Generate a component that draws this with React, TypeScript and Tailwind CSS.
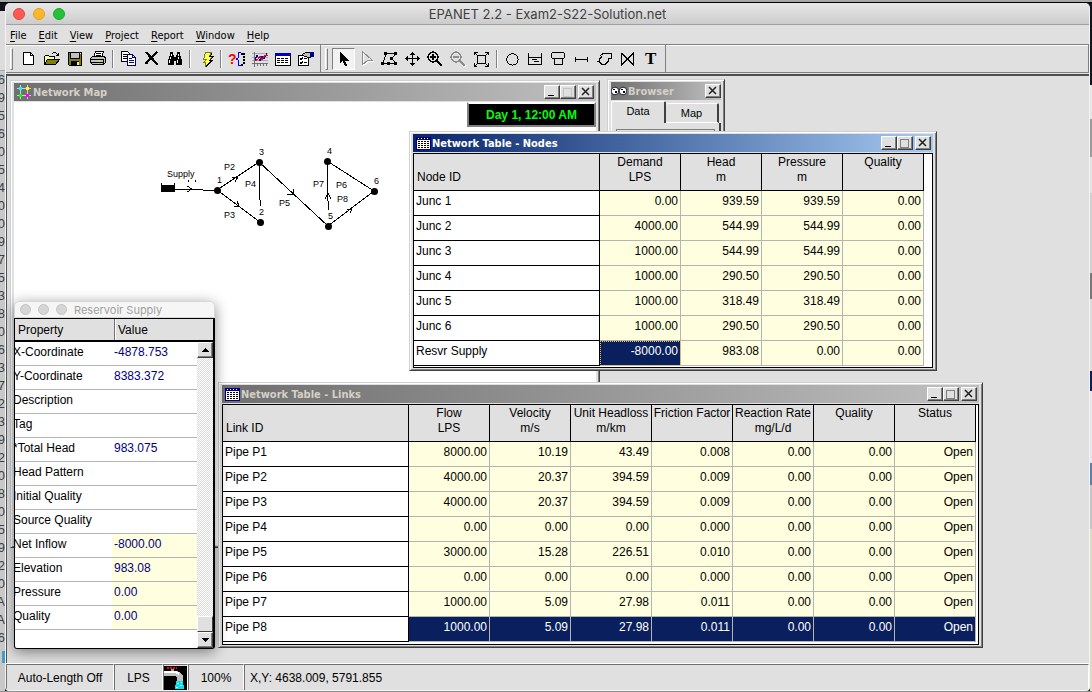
import React from "react";

type Row = { id: string; values: string[]; selected?: number[] };
type Column = [string, string];

const MENU = ["File", "Edit", "View", "Project", "Report", "Window", "Help"];

const NODE_COLUMNS: Column[] = [["Demand", "LPS"], ["Head", "m"], ["Pressure", "m"], ["Quality", ""]];
const NODE_ROWS: Row[] = [
  { id: "Junc 1", values: ["0.00", "939.59", "939.59", "0.00"] },
  { id: "Junc 2", values: ["4000.00", "544.99", "544.99", "0.00"] },
  { id: "Junc 3", values: ["1000.00", "544.99", "544.99", "0.00"] },
  { id: "Junc 4", values: ["1000.00", "290.50", "290.50", "0.00"] },
  { id: "Junc 5", values: ["1000.00", "318.49", "318.49", "0.00"] },
  { id: "Junc 6", values: ["1000.00", "290.50", "290.50", "0.00"] },
  { id: "Resvr Supply", values: ["-8000.00", "983.08", "0.00", "0.00"], selected: [0] },
];

const LINK_COLUMNS: Column[] = [
  ["Flow", "LPS"],
  ["Velocity", "m/s"],
  ["Unit Headloss", "m/km"],
  ["Friction Factor", ""],
  ["Reaction Rate", "mg/L/d"],
  ["Quality", ""],
  ["Status", ""],
];
const LINK_ROWS: Row[] = [
  { id: "Pipe P1", values: ["8000.00", "10.19", "43.49", "0.008", "0.00", "0.00", "Open"] },
  { id: "Pipe P2", values: ["4000.00", "20.37", "394.59", "0.009", "0.00", "0.00", "Open"] },
  { id: "Pipe P3", values: ["4000.00", "20.37", "394.59", "0.009", "0.00", "0.00", "Open"] },
  { id: "Pipe P4", values: ["0.00", "0.00", "0.00", "0.000", "0.00", "0.00", "Open"] },
  { id: "Pipe P5", values: ["3000.00", "15.28", "226.51", "0.010", "0.00", "0.00", "Open"] },
  { id: "Pipe P6", values: ["0.00", "0.00", "0.00", "0.000", "0.00", "0.00", "Open"] },
  { id: "Pipe P7", values: ["1000.00", "5.09", "27.98", "0.011", "0.00", "0.00", "Open"] },
  {
    id: "Pipe P8",
    values: ["1000.00", "5.09", "27.98", "0.011", "0.00", "0.00", "Open"],
    selected: [0, 1, 2, 3, 4, 5, 6],
  },
];

const PROPERTIES: { name: string; value: string; computed?: boolean }[] = [
  { name: "X-Coordinate", value: "-4878.753" },
  { name: "Y-Coordinate", value: "8383.372" },
  { name: "Description", value: "" },
  { name: "Tag", value: "" },
  { name: "*Total Head", value: "983.075" },
  { name: "Head Pattern", value: "" },
  { name: "Initial Quality", value: "" },
  { name: "Source Quality", value: "" },
  { name: "Net Inflow", value: "-8000.00", computed: true },
  { name: "Elevation", value: "983.08", computed: true },
  { name: "Pressure", value: "0.00", computed: true },
  { name: "Quality", value: "0.00", computed: true },
];

const BACKDROP_DIGITS = "69560540097538063723920805920AA6".split("");

const RIGHT_STRIP = [
  "h-[82px] bg-[#12131c]",
  "h-[34px] bg-[#e6e6e6]",
  "h-[38px] bg-[#9a9a9a]",
  "h-[36px] bg-[#e2e2e2]",
  "h-[80px] bg-[#d0d0d0]",
  "h-[26px] bg-[#777777]",
  "h-[72px] bg-[#dcdcdc]",
  "h-[20px] bg-[#0a1f5c]",
  "h-[72px] bg-[#e6e6ea]",
  "h-[22px] bg-[#5a7fb0]",
  "h-[44px] bg-[#c4c4c4]",
  "flex-1 bg-[#dcdcc0]",
];

/* ---------- toolbar drawings ---------- */

const K = "#000000";

const icons: Record<string, React.ReactNode> = {
  New: (
    <>
      <path d="M4.5 3.5h7l3 3v9h-10z" fill="#fff" stroke={K} />
      <path d="M11.5 3.5v3h3" fill="none" stroke={K} />
    </>
  ),
  Open: (
    <>
      <path d="M2.5 15.5v-8l1-1h3l1 1h5v3" fill="#ffff99" stroke={K} />
      <path d="M2.5 15.5l3-5h12l-4 5z" fill="#808000" stroke={K} />
      <path d="M10 4h1M11 3h3M14 4h1M15 5h1M16 4v3M14 6.5h3" fill="none" stroke={K} />
    </>
  ),
  Save: (
    <>
      <path d="M3.5 3.5h13v13h-12l-1-1z" fill="#808000" stroke={K} />
      <path d="M5.5 3.5h9v6h-9z" fill="#c0c0c0" stroke={K} />
      <path d="M6 12h8v4h-8z" fill={K} />
      <path d="M12 13h2v3h-2z" fill="#e0e0e0" />
      <path d="M15 4h1v1h-1z" fill="#fff" />
    </>
  ),
  Print: (
    <>
      <path d="M5.5 8.5l2-6h8l-2 6z" fill="#fff" stroke={K} />
      <path d="M8 4.5h5M8 6.5h5" stroke={K} />
      <path d="M2.5 9.5l2-2h12l1 2v4l-2 2h-11l-2-2z" fill="#c0c0c0" stroke={K} />
      <path d="M2 10.5h13M3 13.5h12M15.5 10v5" stroke={K} fill="none" />
      <path d="M9 11.5h4" stroke="#e8e800" />
      <path d="M5 15.5h10" stroke={K} />
    </>
  ),
  Copy: (
    <>
      <path d="M2.5 2.5h6l2 2v8h-8z" fill="#fff" stroke={K} />
      <path d="M4 5.5h4M4 7.5h4M4 9.5h4" stroke={K} />
      <path d="M8.5 5.5h5l3 3v8h-8z" fill="#fff" stroke="#000080" />
      <path d="M13.5 5.5v3h3M10 9.5h3M10 11.5h5M10 13.5h5" fill="none" stroke="#000080" />
    </>
  ),
  Delete: (
    <>
      <path d="M3 3h2l10 11v1h-1zM4 3l11 12" fill={K} stroke={K} />
      <path d="M15 3l-11 11" stroke={K} strokeWidth="1.5" />
      <path d="M3 13h3v2h-3z" fill={K} />
    </>
  ),
  Find: (
    <>
      <path d="M5 3h3v3h1v2h2v-2h1v-3h3v3l2 5v5h-6v-4h-2v4h-6v-5l2-5z" fill={K} />
      <path d="M6 5v2M5 8v2M4 11v3M13 5v2M13 8v2M12 11v3" stroke="#fff" />
    </>
  ),
  Run: (
    <>
      <path d="M9.5 3.5h6l-2 4h3l-3 4h2l-6 6v-4h-2l3-3h-3z" fill="#ffff60" stroke="#808000" />
      <path d="M16 4l-2 3.5h3l-3 4h2l-6 6" fill="none" stroke={K} />
    </>
  ),
  Query: (
    <>
      <text x="1" y="15" fill="#ff0000" className="font-['Liberation_Sans',Arial,sans-serif] text-[14px] font-bold">
        ?
      </text>
      <path d="M13.5 3.5h-2v5l-2 1.5 2 1.5v5h2" stroke="#0000ff" fill="none" />
      <path d="M14 4.5h3M17 4v12M14 15.5h3" stroke={K} strokeWidth="2" strokeDasharray="2 1" fill="none" />
    </>
  ),
  Graph: (
    <>
      <path d="M2 4.5h16M2 8.5h16M2 11.5h16" stroke="#a8a8a8" />
      <path d="M4.5 3v15M2 14.5h16M7.5 15v2M10.5 15v2M13.5 15v2M16.5 15v2" stroke="#707070" />
      <path d="M5 11l2-5 3 6 2-5 2 3 3-6" stroke="#0000c0" fill="none" />
      <path d="M5 12l3-2 2-3 2 4 3-5 3 1" stroke="#ff0000" fill="none" />
    </>
  ),
  Table: (
    <>
      <path d="M2.5 4.5h15v12h-15z" fill="#fff" stroke={K} />
      <path d="M2 4h16v3h-16z" fill="#0000c0" />
      <path d="M4 9.5h12M4 11.5h12M4 13.5h12" stroke={K} strokeDasharray="3 1" />
    </>
  ),
  Options: (
    <>
      <path d="M2.5 6.5h10v10h-10z" fill="#fff" stroke={K} />
      <path d="M4 9.5l1 1 2-2M8 9.5h3M4 13.5l1 1 2-2M8 13.5h3" stroke={K} fill="none" />
      <path d="M6.5 5.5l3-2h5v5h-3l-1-1h-2z" fill="#c0c0c0" stroke={K} />
      <path d="M14 3h4v5h-4z" fill="#000080" />
    </>
  ),
  Select: <path d="M6 3l8.5 8.5h-4l2.5 5-2 1-2.500-5.500-2.500 2.500z" fill={K} />,
  Vertex: (
    <>
      <path d="M6.5 3.5l10 9h-5l-5 4z" fill="none" stroke="#fff" />
      <path d="M5.5 2.5l10 9h-5l-5 4z" fill="none" stroke="#8c8c8c" />
    </>
  ),
  Region: (
    <>
      <path d="M3 14.5l3-10h10l-4 5 4 5z" fill="none" stroke={K} />
      <path d="M4 3h3v3h-3zM14 3h3v3h-3zM1 13h3v3h-3zM14 13h3v3h-3zM10 8h3v3h-3zM7 13h3v3h-3z" fill={K} />
    </>
  ),
  Pan: (
    <path
      d="M9.5 3v14M2 9.5h15M7 5.5h5M8 4.5h3M7 14.5h5M8 15.5h3M4.5 7v5M3.5 8v3M14.5 7v5M15.5 8v3"
      stroke={K}
      fill="none"
    />
  ),
  "Zoom In": (
    <>
      <circle cx="7" cy="8" r="5" fill="none" stroke={K} strokeWidth="1.3" />
      <path d="M4 8h6M7 5v6" stroke={K} strokeWidth="1.5" />
      <path d="M11 12l5 5" stroke={K} strokeWidth="2.5" />
    </>
  ),
  "Zoom Out": (
    <>
      <path d="M12 13l5 5" stroke="#fff" strokeWidth="2" />
      <circle cx="7" cy="8" r="5" fill="none" stroke="#8c8c8c" strokeWidth="1.3" />
      <path d="M4 8h6" stroke="#8c8c8c" strokeWidth="1.5" />
      <path d="M11 12l5 5" stroke="#8c8c8c" strokeWidth="2.5" />
    </>
  ),
  "Full Extent": (
    <>
      <path d="M5.5 6.5h8v8h-8z" fill="none" stroke={K} />
      <path
        d="M2.5 6v-2.500h3M13 3.500h3.500v2.500M16.500 14v3.500h-3.500M5 17.500h-2.500v-3.500M3 4l3 3M16 4l-3 3M16 17l-3-3M3 17l3-3"
        fill="none"
        stroke={K}
      />
    </>
  ),
  Junction: <circle cx="9.5" cy="10.5" r="5.7" fill="none" stroke={K} />,
  Reservoir: <path d="M2.5 4v11.500h13v-11.500M3 8.500h13M6 10.500h5M8 12.500h5" fill="none" stroke={K} />,
  Tank: <path d="M3.5 3.5h11l1 1v4l-1 1h-11l-1-1v-4zM5.500 9.500h8v6h-8z" fill="none" stroke={K} />,
  Pipe: <path d="M3.5 8v5M15.500 8v5M3 10.500h13" fill="none" stroke={K} />,
  Pump: <path d="M8 4.500h8.500v5h-3.500v3l-3 3h-3l-3-3v-2l3-3M2 12.500h2M5.500 6.500l2.500-2" fill="none" stroke={K} />,
  Valve: <path d="M3.5 4v12l12-12v12l-12-12" fill="none" stroke={K} />,
  Label: (
    <text x="4" y="15" className="font-['Liberation_Serif','Times_New_Roman',serif] text-[17px] font-bold">
      T
    </text>
  ),
};

function ToolButton({ name, pressed }: { name: string; pressed?: boolean }) {
  return (
    <button
      type="button"
      aria-label={name}
      className={
        pressed
          ? "flex h-[22px] w-[23px] items-center justify-center border border-t-[#808080] border-l-[#808080] border-r-white border-b-white bg-[#f2f2f2]"
          : "flex h-[22px] w-[23px] items-center justify-center"
      }
    >
      <svg width="19" height="20" viewBox="0 0 19 20" className="shrink-0" shapeRendering="crispEdges" aria-hidden="true">
        {icons[name]}
      </svg>
    </button>
  );
}

function ToolGroup({ items }: { items: string[] }) {
  return (
    <div className="flex h-full items-center border-r border-[#808080] pr-[3px]">
      <span className="mr-1 ml-1 h-[22px] w-[3px] border border-t-white border-r-[#808080] border-b-[#808080] border-l-white" />
      {items.map((item, i) =>
        item === "|" ? (
          <span key={i} className="mx-[3px] h-[18px] w-[2px] border-r border-l border-r-white border-l-[#808080]" />
        ) : (
          <ToolButton key={i} name={item} pressed={item === "Select"} />
        ),
      )}
    </div>
  );
}

/* ---------- child window chrome ---------- */

function CaptionButton({ kind, dim }: { kind: "Minimize" | "Maximize" | "Close"; dim?: boolean }) {
  return (
    <button
      type="button"
      aria-label={kind}
      className="flex h-[14px] w-4 items-center justify-center border border-t-white border-r-[#404040] border-b-[#404040] border-l-white bg-[#e0e0e0] shadow-[inset_-1px_-1px_0_#808080]"
    >
      <svg width="12" height="12" viewBox="0 0 12 12" className="shrink-0" shapeRendering="crispEdges" aria-hidden="true">
        {kind === "Minimize" && <path d="M2 9h6v1h-6z" fill={K} />}
        {kind === "Maximize" && (
          <path d="M1.5 2v8.500h8v-8.500M1 2h9" fill="none" stroke={dim ? "#c4c4c4" : "#808080"} strokeWidth="1" />
        )}
        {kind === "Close" && <path d="M2 2l7 7M9 2l-7 7" stroke="#202020" strokeWidth="1.5" shapeRendering="auto" />}
      </svg>
    </button>
  );
}

function TableGlyph() {
  return (
    <svg width="15" height="13" viewBox="0 0 15 13" shapeRendering="crispEdges" aria-hidden="true">
      <path d="M0 0h15v13h-15z" fill="#000080" />
      <path d="M1 3h13v9h-13z" fill={K} />
      <path d="M2 1.5h1M5 1.5h1M8 1.5h1M11 1.5h1" stroke="#fff" />
      <path d="M1 3.5h13M1 5.5h13M1 7.5h13M1 9.5h13M1 11.5h13" stroke="#fff" />
      <path d="M1.500 3v9M4.500 3v9M7.500 3v9M10.500 3v9M13.500 3v9" stroke="#fff" />
    </svg>
  );
}

function MapGlyph() {
  return (
    <svg width="15" height="14" viewBox="1 0 15 14" shapeRendering="crispEdges" aria-hidden="true">
      <path d="M4.5 0v14M11.500 0v14M1 3.500h14M1 10.500h14" stroke="#d0d0d0" />
      <path d="M3 2h3v3h-3z" fill="#00ffff" />
      <path d="M10 2h3v3h-3z" fill="#ffff00" />
      <path d="M3 9h3v3h-3z" fill="#00ff00" />
      <path d="M10 9h3v3h-3z" fill="#ff00ff" />
    </svg>
  );
}

function EyesGlyph() {
  return (
    <svg width="16" height="12" viewBox="0 0 16 12" aria-hidden="true">
      <circle cx="4" cy="6" r="3.8" fill="#fff" stroke={K} strokeWidth="0.8" />
      <circle cx="12" cy="6" r="3.8" fill="#fff" stroke={K} strokeWidth="0.8" />
      <path d="M4 6h2v2h-2zM12 6h2v2h-2z" fill="#000050" />
      <path d="M2 4.500h2M10 4.500h2" stroke={K} />
    </svg>
  );
}

function ChildWindow(props: {
  title: string;
  glyph: React.ReactNode;
  place: string;
  active?: boolean;
  palette?: boolean;
  dimMax?: boolean;
  children: React.ReactNode;
}) {
  const inset = props.palette ? "pr-0 pl-0" : "pr-[2px] pl-[3px]";
  return (
    <section
      aria-label={props.title}
      className={`absolute flex flex-col border border-t-[#d0d0d0] border-r-[#404040] border-b-[#404040] border-l-[#d0d0d0] bg-[#e0e0e0] px-[3px] py-[2px] shadow-[inset_1px_1px_0_#ffffff,inset_-1px_-1px_0_#808080] ${props.place}`}
    >
      <header
        className={
          props.active
            ? `mb-px flex h-[18px] shrink-0 items-center bg-linear-to-r from-[#0a246a] to-[#a6caf0] text-white ${inset}`
            : `mb-px flex h-[18px] shrink-0 items-center bg-linear-to-r from-[#707070] to-[#c0c0c0] text-[#d4d0c8] ${inset}`
        }
      >
        {props.glyph}
        <h2 className="ml-px flex-1 pt-[2px] font-['DejaVu_Sans_Condensed','DejaVu_Sans',sans-serif] text-[11px] leading-4 font-bold whitespace-nowrap">
          {props.title}
        </h2>
        {!props.palette && (
          <>
            <CaptionButton kind="Minimize" />
            <CaptionButton kind="Maximize" dim={props.dimMax} />
            <span className="w-[2px]" />
          </>
        )}
        <CaptionButton kind="Close" />
      </header>
      {props.children}
    </section>
  );
}

function DataGrid({ idLabel, columns, rows }: { idLabel: string; columns: Column[]; rows: Row[] }) {
  return (
    <div className="flex-1 border border-black bg-white">
      <table className="table-fixed border-separate border-spacing-0 text-[12px] leading-[15px]">
        <colgroup>
          <col className="w-[186px]" />
          {columns.map(([name]) => (
            <col key={name} className="w-[81px]" />
          ))}
        </colgroup>
        <thead>
          <tr className="h-[37px] bg-[#e0e0e0]">
            <th scope="col" className="border-r border-b border-black px-[3px] pb-[5px] text-left align-bottom font-normal">
              {idLabel}
            </th>
            {columns.map(([name, unit]) => (
              <th key={name} scope="col" className="border-r border-b border-black px-0 pt-px pb-0 align-top font-normal whitespace-nowrap">
                {name}
                <br />
                {unit}
              </th>
            ))}
          </tr>
        </thead>
        <tbody>
          {rows.map((row) => (
            <tr key={row.id} className="h-[25px]">
              <th scope="row" className="border-r border-b border-black px-[2px] pt-[3px] pb-0 text-left align-top font-normal">
                {row.id}
              </th>
              {row.values.map((value, i) => (
                <td
                  key={i}
                  className={
                    row.selected?.includes(i)
                      ? row.selected.length === 1
                        ? "border-r border-b border-[#b4b4b4] bg-[#0a1f5e] px-[2px] pt-[3px] pb-0 text-right align-top text-white outline-1 -outline-offset-1 outline-[#f0c050] outline-dotted"
                        : "border-r border-b border-[#b4b4b4] bg-[#0a1f5e] px-[2px] pt-[3px] pb-0 text-right align-top text-white"
                      : "border-r border-b border-[#b4b4b4] bg-[#ffffdf] px-[2px] pt-[3px] pb-0 text-right align-top"
                  }
                >
                  {value}
                </td>
              ))}
            </tr>
          ))}
        </tbody>
      </table>
    </div>
  );
}

/* ---------- network map ---------- */

const NODES = [
  { id: "1", x: 217, y: 190, lx: 217, ly: 183 },
  { id: "2", x: 260, y: 222, lx: 259, ly: 215 },
  { id: "3", x: 259, y: 162, lx: 259, ly: 155 },
  { id: "4", x: 327, y: 161, lx: 327, ly: 154 },
  { id: "5", x: 328, y: 226, lx: 328, ly: 219 },
  { id: "6", x: 374, y: 191, lx: 374, ly: 184 },
];
const PIPE_LABELS = [
  { t: "Supply", x: 167, y: 177 },
  { t: "P2", x: 224, y: 170 },
  { t: "P3", x: 224, y: 218 },
  { t: "P4", x: 245, y: 187 },
  { t: "P5", x: 279, y: 206 },
  { t: "P6", x: 336, y: 188 },
  { t: "P7", x: 313, y: 187 },
  { t: "P8", x: 337, y: 202 },
];

function NetworkMap() {
  return (
    <svg
      width="450"
      height="300"
      viewBox="14 102 450 300"
      className="absolute top-0 left-0 font-['Liberation_Sans',Arial,sans-serif] text-[9px]"
      role="img"
      aria-label="Pipe network"
    >
      <g stroke={K} fill="none" shapeRendering="crispEdges">
        <path d="M174 189l43 1.500M217 190l42-28M217 190l43 32M259.500 162v32l1 12M259 162l69 64M327.500 161v30l1 19M327 161l47 30M328 226l46-35" />
        <path d="M187 186l5 3-5 3M232 177h6l-3 5M234 206h5l-2-5M293 189v5h-6M325 199l3-6 3 6M347 209h5l-2 4M188.500 180v2M195.500 180v2" />
      </g>
      <path d="M161 183h1v2h12v-2h1v9h-14z" fill={K} />
      {NODES.map((n) => (
        <circle key={n.id} cx={n.x + 0.5} cy={n.y + 0.5} r="3.5" fill={K} />
      ))}
      {NODES.map((n) => (
        <text key={n.id} x={n.lx} y={n.ly}>
          {n.id}
        </text>
      ))}
      {PIPE_LABELS.map((l) => (
        <text key={l.t} x={l.x} y={l.y}>
          {l.t}
        </text>
      ))}
    </svg>
  );
}

/* ---------- property editor ---------- */

function ScrollArrow({ up }: { up?: boolean }) {
  return (
    <button
      type="button"
      aria-label={up ? "Scroll up" : "Scroll down"}
      className="flex h-4 w-full items-center justify-center border border-t-white border-r-[#404040] border-b-[#404040] border-l-white bg-[#e0e0e0] shadow-[inset_-1px_-1px_0_#808080]"
    >
      <svg width="7" height="4" viewBox="0 0 7 4" shapeRendering="crispEdges" aria-hidden="true">
        <path d={up ? "M3 0h1v1h1v1h1v1h1v1h-7v-1h1v-1h1v-1h1z" : "M0 0h7v1h-1v1h-1v1h-1v1h-1v-1h-1v-1h-1v-1h-1z"} fill={K} />
      </svg>
    </button>
  );
}

function PropertyEditor() {
  return (
    <section
      aria-label="Reservoir Supply"
      className="absolute top-[225px] left-[7px] flex h-[348px] w-[201px] flex-col rounded-t-[5px] rounded-b-[3px] bg-[#f4f4f4] shadow-[0_3px_14px_rgba(0,0,0,0.45)]"
    >
      <header className="flex h-[17px] shrink-0 items-center gap-[7px] rounded-t-[5px] border border-[#d8d8d8] bg-[#f6f6f6] px-[5px]">
        <span className="size-[11px] rounded-full border border-[#c4c4c4] bg-[#d6d6d6]" />
        <span className="size-[11px] rounded-full border border-[#c4c4c4] bg-[#d6d6d6]" />
        <span className="size-[11px] rounded-full border border-[#c4c4c4] bg-[#d6d6d6]" />
        <h2 className="pt-px font-[Inter,sans-serif] text-[11px] leading-[14px] text-[#a0a0a0]">Reservoir Supply</h2>
      </header>
      <div className="flex flex-1 flex-col overflow-hidden rounded-b-[3px] border border-r-2 border-black bg-white">
        <div className="flex h-[23px] shrink-0 border-b-2 border-black bg-[#e0e0e0] text-[12px] leading-[22px]">
          <span className="w-[100px] border-r border-[#707070] pl-[3px]">Property</span>
          <span className="flex-1 border-l border-white pl-[2px]">Value</span>
        </div>
        <div className="flex flex-1">
          <table className="flex-1 border-separate border-spacing-0 self-start text-[12px] leading-[15px]">
            <tbody className="table w-full table-fixed">
              {PROPERTIES.map((p) => (
                <tr key={p.name} className="h-6">
                  <th
                    scope="row"
                    className="w-[97px] border-b border-[#b4b4b4] px-0 pt-[3px] pb-0 -indent-[2px] text-left align-top font-normal whitespace-nowrap"
                  >
                    {p.name}
                  </th>
                  <td
                    className={
                      p.computed
                        ? "border-b border-[#b4b4b4] bg-[#ffffdf] px-[2px] pt-[3px] pb-0 align-top text-[#000080]"
                        : "border-b border-[#b4b4b4] px-[2px] pt-[3px] pb-0 align-top text-[#000080]"
                    }
                  >
                    {p.value}
                  </td>
                </tr>
              ))}
            </tbody>
          </table>
          <div className="flex w-4 flex-col bg-[repeating-conic-gradient(#ffffff_0_25%,#dcdcdc_0_50%)] bg-size-[2px_2px]">
            <ScrollArrow up />
            <span className="flex-1" />
            <span className="h-4 border border-t-white border-r-[#404040] border-b-[#404040] border-l-white bg-[#e0e0e0]" />
            <ScrollArrow />
          </div>
        </div>
      </div>
    </section>
  );
}

function StatusCell({ children, className }: { children?: React.ReactNode; className: string }) {
  return (
    <div className={`flex items-center border-t border-r border-l border-t-[#707070] border-r-white border-l-[#707070] ${className}`}>
      {children}
    </div>
  );
}

export default function App() {
  return (
    <div className="flex h-screen flex-col overflow-hidden bg-[#9c9c9c] font-['Liberation_Sans',Arial,sans-serif] text-black">
      <div className="h-[3px] shrink-0 border-b border-black bg-[#a8a8a8]" />
      <div className="flex min-h-0 flex-1 bg-[#12131c]">
        <aside aria-hidden="true" className="flex w-[5px] shrink-0 flex-col items-end overflow-hidden bg-[#c8c8c8] text-[13px] leading-[18px] text-[#404040]">
          <span className="h-2 w-full shrink-0 bg-[#12131c]" />
          <span className="h-[60px] w-full shrink-0 border-b border-[#aaaaaa] bg-[#dcdcdc]" />
          {BACKDROP_DIGITS.map((d, i) => (
            <span key={i}>{d}</span>
          ))}
          <span className="mt-1 h-3 w-[3px] shrink-0 bg-[#40a0c8]" />
        </aside>

        <main className="flex min-w-0 flex-1 flex-col overflow-hidden rounded-t-[5px] rounded-b-[4px] border-r border-b border-l border-[#f4f4f4] bg-[#e0e0e0]">
          <header className="relative flex h-[22px] shrink-0 items-center justify-center border-b border-[#a0a0a0] bg-linear-to-b from-[#e8e8e8] to-[#cccccc]">
            <div className="absolute left-[7px] flex gap-2">
              <button type="button" aria-label="Close" className="size-3 rounded-full border border-[#e0443e] bg-[#ff5a52]" />
              <button type="button" aria-label="Minimize" className="size-3 rounded-full border border-[#dea123] bg-[#ffb62b]" />
              <button type="button" aria-label="Zoom" className="size-3 rounded-full border border-[#1aab29] bg-[#25c138]" />
            </div>
            <h1 className="pt-px font-[Inter,sans-serif] text-[13px] leading-[20px] text-[#404040]">EPANET 2.2 - Exam2-S22-Solution.net</h1>
          </header>

          <nav className="flex h-[19px] shrink-0 items-end">
            {MENU.map((m) => (
              <button
                key={m}
                type="button"
                className="px-[6px] font-['DejaVu_Sans_Condensed','DejaVu_Sans',sans-serif] text-[11px] leading-4 first:pl-[4px]"
              >
                <span className="underline underline-offset-2">{m[0]}</span>
                {m.slice(1)}
              </button>
            ))}
          </nav>

          <div className="flex h-[29px] shrink-0 border-t border-r border-b border-[#808080] shadow-[inset_0_1px_0_#ffffff]">
            <ToolGroup
              items={["New", "Open", "Save", "Print", "|", "Copy", "Delete", "Find", "|", "Run", "|", "Query", "Graph", "Table", "Options"]}
            />
            <ToolGroup
              items={["Select", "Vertex", "Region", "Pan", "Zoom In", "Zoom Out", "Full Extent", "|", "Junction", "Reservoir", "Tank", "Pipe", "Pump", "Valve", "Label"]}
            />
          </div>

          <div className="mt-px flex min-h-0 flex-1 flex-col border-t-2 border-l border-t-[#505050] border-l-[#505050]">
            <div className="relative min-h-0 flex-1 overflow-hidden">
              <ChildWindow title="Network Map" glyph={<MapGlyph />} dimMax place="top-[4px] left-[3px] h-[468px] w-[590px]">
                <div className="relative flex-1 bg-white">
                  <NetworkMap />
                  <div className="ml-auto flex h-[25px] w-[129px] items-center justify-center border-2 border-t-white border-r-[#808080] border-b-[#808080] border-l-[#808080] bg-black text-[12px] font-bold text-[#00ff00]">
                    Day 1, 12:00 AM
                  </div>
                </div>
              </ChildWindow>

              <ChildWindow title="Browser" glyph={<EyesGlyph />} palette place="top-[3px] left-[600px] h-[260px] w-[118px]">
                <div role="tablist" className="flex h-[22px] shrink-0 items-end text-[11px]">
                  <button
                    type="button"
                    role="tab"
                    aria-selected="true"
                    className="h-[22px] w-[55px] rounded-t-[2px] border-t border-r-2 border-l border-t-white border-r-[#404040] border-l-white pb-[2px]"
                  >
                    Data
                  </button>
                  <button
                    type="button"
                    role="tab"
                    aria-selected="false"
                    className="h-[20px] w-[53px] rounded-t-[2px] border-t border-r-2 border-b border-t-white border-r-[#404040] border-b-white"
                  >
                    Map
                  </button>
                </div>
                <div className="flex-1 border-r-2 border-l border-r-[#404040] border-l-white px-1 pt-[6px]">
                  <div className="h-5 border border-[#808080]" />
                </div>
              </ChildWindow>

              <ChildWindow title="Network Table - Nodes" glyph={<TableGlyph />} active place="top-[55px] left-[402px] h-[240px] w-[528px]">
                <DataGrid idLabel="Node ID" columns={NODE_COLUMNS} rows={NODE_ROWS} />
              </ChildWindow>

              <ChildWindow title="Network Table - Links" glyph={<TableGlyph />} place="top-[306px] left-[211px] h-[266px] w-[765px]">
                <DataGrid idLabel="Link ID" columns={LINK_COLUMNS} rows={LINK_ROWS} />
              </ChildWindow>

              <PropertyEditor />
            </div>
          </div>

          <footer className="flex h-[27px] shrink-0 border-t border-white text-[12px]">
            <StatusCell className="w-[108px] justify-center">Auto-Length Off</StatusCell>
            <StatusCell className="w-[49px] justify-center">LPS</StatusCell>
            <StatusCell className="w-[25px] justify-center">
              <svg width="23" height="24" viewBox="0 0 23 24" shapeRendering="crispEdges" role="img" aria-label="Results available">
                <path d="M0 0h23v24h-23z" fill={K} />
                <path d="M3 1.500h10" stroke="#ff0000" strokeWidth="2" strokeDasharray="2 1" />
                <path d="M7 3h3v2h-3z" fill="#a0a0a0" />
                <path d="M0 5h13l4 2 2 3v5h-6v-3l-2-2h-11z" fill="#c0c0c0" />
                <path d="M0 6h12l3 2" stroke="#fff" strokeWidth="2" fill="none" />
                <path d="M12 15h7l1 8h-9z" fill="#00e0f0" />
                <path d="M13 17.500h2M16 19.500h2M12 21.500h2M17 16.500h1" stroke="#fff" />
              </svg>
            </StatusCell>
            <StatusCell className="w-[56px] justify-center">100%</StatusCell>
            <StatusCell className="flex-1 pl-[5px]">X,Y: 4638.009, 5791.855</StatusCell>
          </footer>
        </main>

        <aside aria-hidden="true" className="flex w-[2px] shrink-0 flex-col">
          {RIGHT_STRIP.map((c, i) => (
            <span key={i} className={c} />
          ))}
        </aside>
      </div>
      <div className="h-px shrink-0 bg-[#909090]" />
    </div>
  );
}
